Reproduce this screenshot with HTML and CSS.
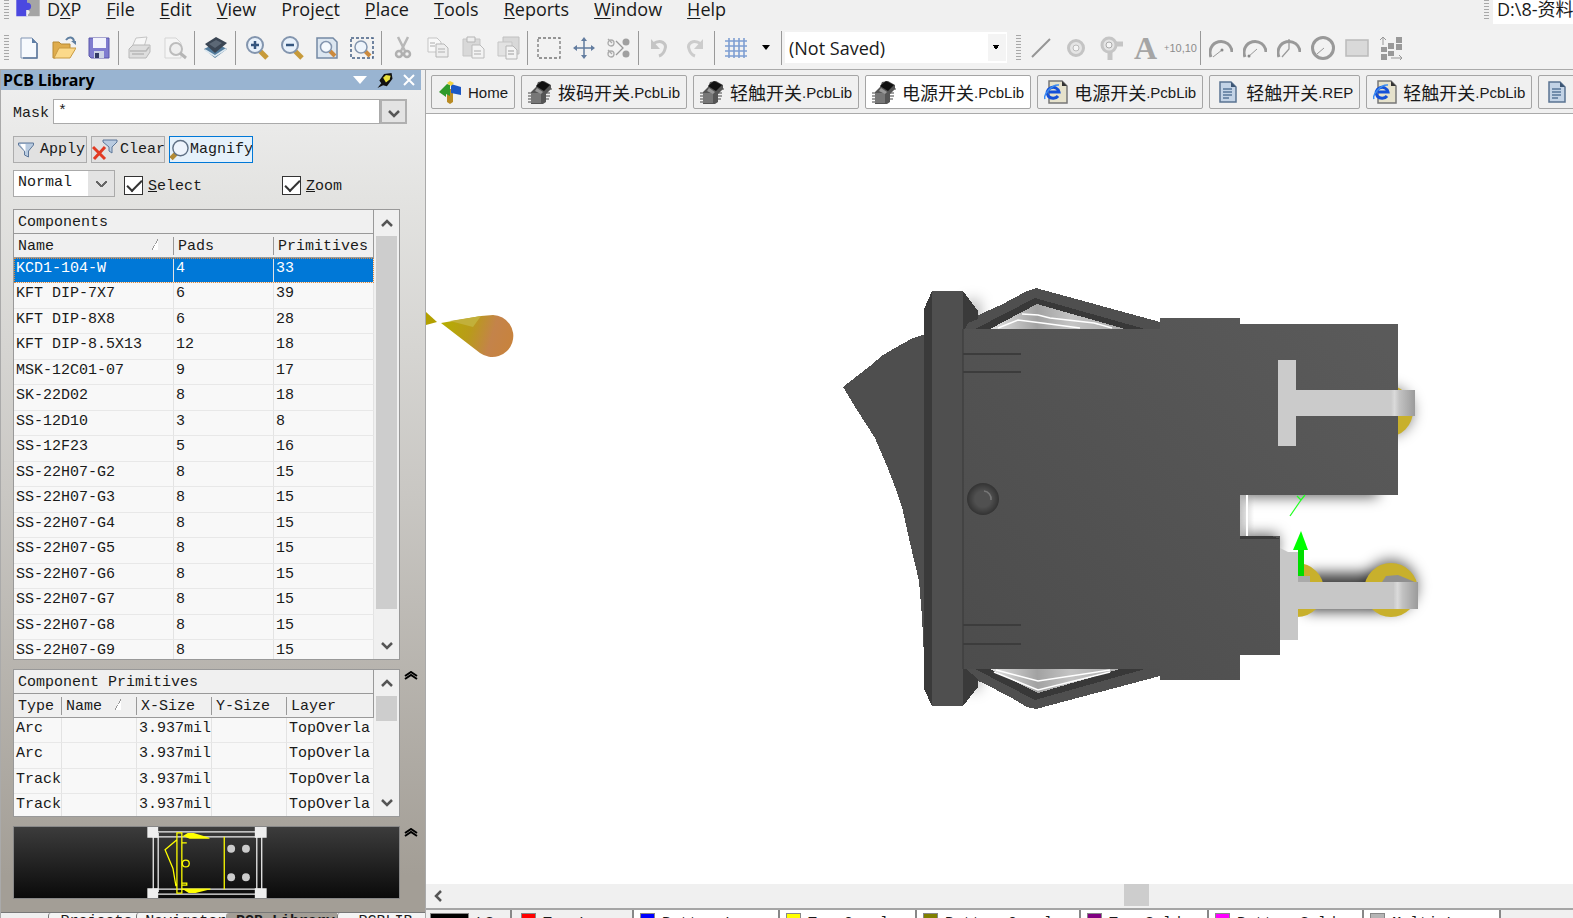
FILE: index.html
```html
<!DOCTYPE html>
<html lang="zh-CN">
<head>
    <meta charset="UTF-8">
    <meta name="viewport" content="width=device-width, initial-scale=1.0">
    <title>PCB Library</title>
    <link rel="stylesheet" href="styles.css">
</head>
<body>
    <!-- shared icons -->
    <svg class="sprite" aria-hidden="true">
        <symbol id="chip" viewBox="0 0 24 24">
            <path d="M0 13h5M0 16h5M0 19h5M0 22h5M16 13h6M16 16h6M16 19h5M18 9h6" stroke="#444" stroke-width="1"/>
            <path d="M3 12l5-5 2-5 6-1 7 4v4l-5 5v8l-3 2H3z" fill="#555"/>
            <path d="M3 13h10v10H3z" fill="#777"/>
            <path d="M8 6l6-5 8 4-6 6z" fill="#111"/>
            <path d="M9 8l6 4-2 2-6-3z" fill="#999"/>
        </symbol>
        <symbol id="ie" viewBox="0 0 24 24">
            <path d="M5 1h13l5 5v17H5z" fill="#e6e2cc" stroke="#777" stroke-width="1.500"/>
            <path d="M18 1v5h5z" fill="#333"/>
            <path d="M14 16a6 5.500 0 1 1 1-4H5" fill="none" stroke="#1450d8" stroke-width="3"/>
            <path d="M1 19C-1 15 8 4 15 5" fill="none" stroke="#3b8bf0" stroke-width="1.500"/>
        </symbol>
        <symbol id="doc" viewBox="0 0 24 24">
            <path d="M4 2h11l5 5v15H4z" fill="#c3d3e6" stroke="#5a7391" stroke-width="1.500"/>
            <path d="M15 2v5h5z" fill="#3d5674"/>
            <path d="M7 9h9M7 12h9M7 15h9M7 18h6" stroke="#587799" stroke-width="1.300"/>
        </symbol>
        <symbol id="up" viewBox="0 0 12 8"><path d="M1 7l5-5 5 5" fill="none" stroke="currentColor" stroke-width="2.500"/></symbol>
        <symbol id="down" viewBox="0 0 12 8"><path d="M1 1l5 5 5-5" fill="none" stroke="currentColor" stroke-width="2.500"/></symbol>
        <symbol id="up2" viewBox="0 0 14 9"><path d="M1 5l6-4 6 4M1 8l6-4 6 4" fill="none" stroke="#000" stroke-width="2"/></symbol>
        <symbol id="funnel" viewBox="0 0 18 18"><path d="M1 2h15v2l-5 6v6l-4-2v-4L1 4z" fill="#b9cbe0" stroke="#5d7799"/><path d="M3 3h5v8L3 4z" fill="#fff"/></symbol>
    </svg>

    <header class="menubar">
        <span class="grip"></span>
        <svg class="logo" viewBox="0 0 26 20"><path d="M12 0h14v18H12z" fill="#a5a5a5"/><path d="M0 0h12v3c6-1 6 9 0 8v7H0z" fill="#4b48e0"/><path d="M12 11c3 0 4 3 1 5v2h-2v-7z" fill="#eee"/></svg>
        <nav class="menu">
            <button>D<u>X</u>P</button>
            <button><u>F</u>ile</button>
            <button><u>E</u>dit</button>
            <button><u>V</u>iew</button>
            <button>Proje<u>c</u>t</button>
            <button><u>P</u>lace</button>
            <button><u>T</u>ools</button>
            <button><u>R</u>eports</button>
            <button><u>W</u>indow</button>
            <button><u>H</u>elp</button>
        </nav>
        <span class="grip"></span>
        <input class="path" type="text" value="D:\8-资料" aria-label="Path">
    </header>

    <div class="toolbar">
        <span class="grip"></span>
        <button aria-label="New"><svg viewBox="0 0 24 24"><path d="M4 2h11l5 5v15H4z" fill="#f6f9fd" stroke="#8296b4"/><path d="M20 7v15H6" fill="none" stroke="#5c779c" stroke-width="1.500"/><path d="M15 2v5h5z" fill="#5f7fa6"/></svg></button>
        <button aria-label="Open"><svg viewBox="0 0 24 24"><path d="M1 6h6l2 2h9v5L3 22H1z" fill="#dfac4c" stroke="#b88a35"/><path d="M7 12h17l-6 10H2z" fill="#fbd98a" stroke="#c99a41"/><path d="M14 4c3-4 7-3 8 1" fill="none" stroke="#5f7fa0" stroke-width="2"/><path d="M19 5h5v4z" fill="#5f7fa0"/></svg></button>
        <button aria-label="Save"><svg viewBox="0 0 24 24"><path d="M2 2h20v20H4l-2-2z" fill="#7f7ccf" stroke="#5a57aa"/><path d="M6 2h13v10H6z" fill="#f2f3fc"/><path d="M7 15h10v7H7z" fill="#cdd3e6"/><path d="M8 17h4v5H8z" fill="#333a66"/></svg></button>
        <span class="sep"></span>
        <button aria-label="Print"><svg viewBox="0 0 24 24"><path d="M8 2l11-1-3 10H4z" fill="#f7f7f7" stroke="#c5c5c5"/><path d="M1 13l4-4h17v7l-4 6H1z" fill="#dedede" stroke="#b8b8b8"/><path d="M2 15h16l3-4M4 18h12" fill="none" stroke="#b8b8b8" stroke-width="1.500"/></svg></button>
        <button aria-label="Print preview"><svg viewBox="0 0 24 24"><path d="M2 2h11l5 5v15H2z" fill="#f5f5f5" stroke="#d5d5d5"/><circle cx="13" cy="13" r="6" fill="#eee" stroke="#bcbcbc" stroke-width="2"/><path d="M17 17l6 5" stroke="#b5b5b5" stroke-width="3"/></svg></button>
        <span class="sep"></span>
        <button aria-label="Layers"><svg viewBox="0 0 24 24"><path d="M0 13l12-6 11 6-12 9z" fill="#547d9e"/><path d="M1 14l10 6 11-7" fill="none" stroke="#dce8f0" stroke-width="1.500"/><path d="M1 8l11-7 11 6-12 10z" fill="#3b4654"/><path d="M5 8l7-4 6 3-7 5z" fill="#5c6876"/></svg></button>
        <span class="sep"></span>
        <button aria-label="Zoom in"><svg viewBox="0 0 24 24"><path d="M15 15l7 7" stroke="#c79a3a" stroke-width="5"/><circle cx="10" cy="9" r="8" fill="#e8f1fb" stroke="#8395ae" stroke-width="2"/><path d="M6 9h8M10 5v8" stroke="#35567f" stroke-width="2.500"/></svg></button>
        <button aria-label="Zoom out"><svg viewBox="0 0 24 24"><path d="M15 15l7 7" stroke="#c79a3a" stroke-width="5"/><circle cx="10" cy="9" r="8" fill="#e8f1fb" stroke="#8395ae" stroke-width="2"/><path d="M6 9h8" stroke="#35567f" stroke-width="2.500"/></svg></button>
        <button aria-label="Fit document"><svg viewBox="0 0 24 24"><path d="M2 2h16l4 4v16H2z" fill="#dce6f0" stroke="#7489a4" stroke-width="1.500"/><path d="M15 15l5 5" stroke="#cc8a3d" stroke-width="4"/><circle cx="11" cy="11" r="5.500" fill="#f5f9fd" stroke="#8395ae" stroke-width="1.500"/></svg></button>
        <button aria-label="Fit area"><svg viewBox="0 0 24 24"><path d="M1 2h22v20H1z" fill="none" stroke="#445f84" stroke-width="1.500" stroke-dasharray="3 2"/><path d="M15 15l5 5" stroke="#cc8a3d" stroke-width="4"/><circle cx="11" cy="11" r="6" fill="#eef4fb" stroke="#8395ae" stroke-width="1.500"/></svg></button>
        <span class="sep"></span>
        <button aria-label="Cut"><svg viewBox="0 0 24 24"><path d="M7 1l7 14M17 1l-7 14" stroke="#b8b8b8" stroke-width="2.500"/><circle cx="8" cy="18" r="3" fill="none" stroke="#b0b0b0" stroke-width="2.500"/><circle cx="16" cy="18" r="3" fill="none" stroke="#b0b0b0" stroke-width="2.500"/></svg></button>
        <button aria-label="Copy"><svg viewBox="0 0 24 24"><path d="M2 2h9l4 4v10H2z" fill="#f8f8f8" stroke="#c5c5c5"/><path d="M10 8h8l4 4v9H10z" fill="#eee" stroke="#b5b5b5"/><path d="M4 7h5M4 10h5M12 13h7M12 16h7" stroke="#c5c5c5" stroke-width="1.500"/></svg></button>
        <button aria-label="Paste"><svg viewBox="0 0 24 24"><path d="M2 3h17v17H2z" fill="#d8d8d8" stroke="#c5c5c5"/><path d="M6 1h8v5H6z" fill="#eee" stroke="#b5b5b5"/><path d="M11 9h8l4 4v9H11z" fill="#f3f3f3" stroke="#bbb"/><path d="M13 15h7M13 18h7" stroke="#c5c5c5" stroke-width="1.500"/></svg></button>
        <button aria-label="Paste special"><svg viewBox="0 0 24 24"><path d="M7 1h16v17H7z" fill="#d8d8d8" stroke="#c0c0c0"/><path d="M2 6h14v14H2z" fill="#e2e2e2" stroke="#c5c5c5"/><path d="M10 10h7l4 4v9H10z" fill="#f3f3f3" stroke="#b5b5b5"/><path d="M12 15h6M12 18h6" stroke="#bbb" stroke-width="1.500"/></svg></button>
        <span class="sep"></span>
        <button aria-label="Select area"><svg viewBox="0 0 24 24"><path d="M1 2h22v20H1z" fill="none" stroke="#777" stroke-width="1.300" stroke-dasharray="3 2"/></svg></button>
        <button aria-label="Move"><svg viewBox="0 0 24 24"><path d="M12 3v18M3 12h18" stroke="#627c9f" stroke-width="1.500"/><path d="M12 1l3 4H9zM12 23l3-4H9zM1 12l4-3v6zM23 12l-4-3v6z" fill="#627c9f"/></svg></button>
        <button aria-label="Deselect"><svg viewBox="0 0 24 24"><path d="M9 5l7 7-7 7" fill="none" stroke="#999" stroke-width="1.300"/><g fill="none" stroke="#aaa" stroke-width="1.300"><circle cx="4" cy="7" r="3"/><circle cx="4" cy="18" r="3"/><path d="M1 3l4 4M1 14l4 4"/></g><circle cx="19" cy="6" r="3.500" fill="#a0a0a0"/><circle cx="19" cy="18" r="3.500" fill="#a0a0a0"/></svg></button>
        <span class="sep"></span>
        <button aria-label="Undo"><svg viewBox="0 0 24 24"><path d="M5 8c8-6 14 0 12 5-1 4-3 6-6 7" fill="none" stroke="#c5c5c5" stroke-width="3"/><path d="M3 3v10h9z" fill="#c5c5c5"/></svg></button>
        <button aria-label="Redo"><svg viewBox="0 0 24 24"><path d="M18 8C10 2 4 8 6 13c1 4 3 6 6 7" fill="none" stroke="#ccc" stroke-width="3"/><path d="M20 3v10h-9z" fill="#ccc"/></svg></button>
        <span class="sep"></span>
        <button aria-label="Grid"><svg viewBox="0 0 24 24"><path d="M5 2v20M10 2v20M15 2v20M20 2v20M1 5h22M1 10h22M1 15h22M1 20h22" stroke="#7e9ed2" stroke-width="1.600"/></svg></button>
        <button class="narrow" aria-label="Grid options"><svg viewBox="0 0 8 5"><path d="M0 0h8L4 5z"/></svg></button>
        <span class="sep"></span>
        <select class="saved" aria-label="Saved view"><option>(Not Saved)</option></select>
        <span class="grip"></span>
        <button aria-label="Line"><svg viewBox="0 0 24 24"><path d="M3 21L21 3" stroke="#959595" stroke-width="2"/></svg></button>
        <button aria-label="Pad"><svg viewBox="0 0 24 24"><circle cx="12" cy="12" r="7.500" fill="#e5e5e5" stroke="#c4c4c4" stroke-width="3"/><circle cx="12" cy="12" r="3" fill="#f5f5f5" stroke="#bbb"/></svg></button>
        <button aria-label="Via"><svg viewBox="0 0 24 24"><path d="M11 8h13M11 10v14" stroke="#c5c5c5" stroke-width="5"/><circle cx="10" cy="9" r="7" fill="#e5e5e5" stroke="#c5c5c5" stroke-width="3"/><circle cx="10" cy="9" r="3" fill="#f5f5f5" stroke="#aaa"/></svg></button>
        <button class="letter" aria-label="String">A</button>
        <button class="coord" aria-label="Coordinate"><sub>+</sub>10,10</button>
        <span class="sep"></span>
        <div class="draw">
            <button aria-label="Arc by centre"><svg viewBox="0 0 24 24"><path d="M2 21A11 11 0 1 1 23 16" fill="none" stroke="#999" stroke-width="3"/><path d="M4 21l9-7" stroke="#999"/><circle cx="13" cy="14" r="1.500" fill="#888"/></svg></button>
            <button aria-label="Arc by edge"><svg viewBox="0 0 24 24"><path d="M2 21A11 11 0 1 1 23 16" fill="none" stroke="#999" stroke-width="3"/><path d="M5 21l9-8" stroke="#999"/><circle cx="6" cy="20" r="1.500" fill="#888"/></svg></button>
            <button aria-label="Arc any angle"><svg viewBox="0 0 24 24"><path d="M2 21A11 11 0 1 1 23 16" fill="none" stroke="#999" stroke-width="3"/><path d="M5 21l7-8V3" fill="none" stroke="#999" stroke-width="1.300"/></svg></button>
            <button aria-label="Full circle"><svg viewBox="0 0 24 24"><circle cx="12" cy="12" r="10.500" fill="none" stroke="#999" stroke-width="3"/><path d="M6 18l7-6" stroke="#999"/></svg></button>
            <button aria-label="Fill"><svg viewBox="0 0 24 24"><path d="M1 4h22v16H1z" fill="#d9d9d9" stroke="#bbb" stroke-width="1.500"/></svg></button>
            <button aria-label="Array"><svg viewBox="0 0 24 24"><path d="M2 11h6v5H2zM2 18h6v6H2zM9 7h6v6H9zM9 15h6v5H9zM17 1h6v6h-6zM17 8h6v6h-6z" fill="#999"/><path d="M4 9V1M1 4l3-3 3 3M12 22h11M20 19l3 3-3 3" fill="none" stroke="#999"/></svg></button>
        </div>
    </div>

    <main class="workspace">
        <aside class="panel">
            <div class="panel-title">
                <h1>PCB Library</h1>
                <button aria-label="Panel menu"><svg viewBox="0 0 14 8"><path d="M0 0h14L7 8z" fill="#fff"/></svg></button>
                <button aria-label="Pin"><svg viewBox="0 0 16 16"><path d="M0 16l4-5-2-3 5-7 8-1 1 6-6 8-4-1z" fill="#111"/><path d="M6 5l3-3 5 1-1 4-4 3z" fill="#e8e03c"/></svg></button>
                <button aria-label="Close"><svg viewBox="0 0 12 12"><path d="M1 1l10 10M11 1L1 11" stroke="#fff" stroke-width="2"/></svg></button>
            </div>

            <div class="panel-body">
                <div class="mask">
                    <label for="mask">Mask</label>
                    <input type="text" id="mask" value="*">
                    <button aria-label="Show masks"><svg viewBox="0 0 12 8"><use href="#down"/></svg></button>
                </div>
                <div class="actions">
                    <button><svg viewBox="0 0 18 18"><use href="#funnel"/></svg>Apply</button>
                    <button class="clear"><svg viewBox="0 0 26 22"><path d="M1 8l12 12M13 8L2 20" stroke="#e23a22" stroke-width="3"/><g transform="translate(10 0)"><path d="M1 1h14v2l-5 5v6l-3-2V8L1 3z" fill="#b9cbe0" stroke="#5d7799"/></g></svg>Clear</button>
                    <button class="on"><svg viewBox="0 0 20 22"><path d="M1 20l6-6" stroke="#b28a35" stroke-width="5"/><circle cx="11" cy="9" r="8" fill="#eef4fc" stroke="#5f7085" stroke-width="1.500"/></svg>Magnify</button>
                </div>
                <div class="filters">
                    <select aria-label="Mode"><option>Normal</option></select>
                    <input type="checkbox" id="select" checked>
                    <label for="select"><u>S</u>elect</label>
                    <input type="checkbox" id="zoom" checked>
                    <label for="zoom"><u>Z</u>oom</label>
                </div>

                <section class="list components">
                    <div class="rows">
                        <table>
                            <colgroup><col class="c-name"><col class="c-pads"><col></colgroup>
                            <thead>
                                <tr class="title"><th colspan="3">Components</th></tr>
                                <tr><th>Name<i class="sort"></i></th><th>Pads</th><th>Primitives</th></tr>
                            </thead>
                            <tbody>
                                <tr class="selected"><td>KCD1-104-W</td><td>4</td><td>33</td></tr>
                                <tr><td>KFT DIP-7X7</td><td>6</td><td>39</td></tr>
                                <tr><td>KFT DIP-8X8</td><td>6</td><td>28</td></tr>
                                <tr><td>KFT DIP-8.5X13</td><td>12</td><td>18</td></tr>
                                <tr><td>MSK-12C01-07</td><td>9</td><td>17</td></tr>
                                <tr><td>SK-22D02</td><td>8</td><td>18</td></tr>
                                <tr><td>SS-12D10</td><td>3</td><td>8</td></tr>
                                <tr><td>SS-12F23</td><td>5</td><td>16</td></tr>
                                <tr><td>SS-22H07-G2</td><td>8</td><td>15</td></tr>
                                <tr><td>SS-22H07-G3</td><td>8</td><td>15</td></tr>
                                <tr><td>SS-22H07-G4</td><td>8</td><td>15</td></tr>
                                <tr><td>SS-22H07-G5</td><td>8</td><td>15</td></tr>
                                <tr><td>SS-22H07-G6</td><td>8</td><td>15</td></tr>
                                <tr><td>SS-22H07-G7</td><td>8</td><td>15</td></tr>
                                <tr><td>SS-22H07-G8</td><td>8</td><td>15</td></tr>
                                <tr><td>SS-22H07-G9</td><td>8</td><td>15</td></tr>
                            </tbody>
                        </table>
                    </div>
                    <div class="scroll">
                        <button aria-label="Scroll up"><svg viewBox="0 0 12 8"><use href="#up"/></svg></button>
                        <div class="track"><div class="thumb"></div></div>
                        <button aria-label="Scroll down"><svg viewBox="0 0 12 8"><use href="#down"/></svg></button>
                    </div>
                </section>

                <div class="fold">
                    <section class="list primitives">
                        <div class="rows">
                            <table>
                                <colgroup><col class="c-type"><col class="c-size"><col class="c-size"><col class="c-size"><col></colgroup>
                                <thead>
                                    <tr class="title"><th colspan="5">Component Primitives</th></tr>
                                    <tr><th>Type</th><th>Name<i class="sort"></i></th><th>X-Size</th><th>Y-Size</th><th>Layer</th></tr>
                                </thead>
                                <tbody>
                                    <tr><td>Arc</td><td></td><td>3.937mil</td><td></td><td>TopOverla</td></tr>
                                    <tr><td>Arc</td><td></td><td>3.937mil</td><td></td><td>TopOverla</td></tr>
                                    <tr><td>Track</td><td></td><td>3.937mil</td><td></td><td>TopOverla</td></tr>
                                    <tr><td>Track</td><td></td><td>3.937mil</td><td></td><td>TopOverla</td></tr>
                                </tbody>
                            </table>
                        </div>
                        <div class="scroll">
                            <button aria-label="Scroll up"><svg viewBox="0 0 12 8"><use href="#up"/></svg></button>
                            <div class="track"><div class="thumb"></div></div>
                            <button aria-label="Scroll down"><svg viewBox="0 0 12 8"><use href="#down"/></svg></button>
                        </div>
                    </section>
                    <button class="toggle" aria-label="Fold primitives"><svg viewBox="0 0 14 9"><use href="#up2"/></svg></button>
                </div>

                <div class="fold">
                    <div class="preview">
                        <svg viewBox="0 0 386 72">
                            <g fill="none" stroke="#eee">
                                <path d="M139 6v60M144 6v60M244 6v60M249 6v60M138 5h110M138 10h110M138 63h110M138 68h110" stroke-width="1.300"/>
                            </g>
                            <g fill="none" stroke="#ff0" stroke-width="1.300">
                                <path d="M163 13l-12 10 8 19 3 18M163 6h5v61h-5zM211 10v53M168 63h29"/>
                                <circle cx="172" cy="37" r="3.500"/>
                                <path d="M168 16h5M168 57h5v2h-5"/>
                            </g>
                            <path d="M169 9l5-3h6l16 5v1h-20zM169 63h28l-15 4h-7z" fill="#ff0"/>
                            <g fill="#ccc"><circle cx="218" cy="22" r="4"/><circle cx="233" cy="22" r="4"/><circle cx="218" cy="51" r="4"/><circle cx="233" cy="51" r="4"/></g>
                            <path d="M133 0h11v11h-11zM242 0h12v11h-12zM133 62h11v10h-11zM242 62h12v10h-12z" fill="#eee"/>
                        </svg>
                    </div>
                    <button class="toggle" aria-label="Fold preview"><svg viewBox="0 0 14 9"><use href="#up2"/></svg></button>
                </div>
            </div>

            <div class="panel-tabs">
                <button>Projects</button>
                <button>Navigator</button>
                <button class="active">PCB Library</button>
                <button>PCBLIB</button>
            </div>
        </aside>

        <section class="editor">
            <div class="doc-tabs">
                <button><svg viewBox="0 0 24 24"><path d="M9 9h6v13l-3 2-3-2z" fill="#b98b22"/><path d="M1 12l8-8 3 1v11l-4-2v3z" fill="#2f9a2b"/><path d="M13 4l10 3v8l-10-2z" fill="#1c57c4"/><path d="M9 3l3-2 4 2-3 3z" fill="#f0d23c"/></svg>Home</button>
                <button><svg viewBox="0 0 24 24"><use href="#chip"/></svg><b>拨码开关</b>.PcbLib</button>
                <button><svg viewBox="0 0 24 24"><use href="#chip"/></svg><b>轻触开关</b>.PcbLib</button>
                <button class="active"><svg viewBox="0 0 24 24"><use href="#chip"/></svg><b>电源开关</b>.PcbLib</button>
                <button><svg viewBox="0 0 24 24"><use href="#ie"/></svg><b>电源开关</b>.PcbLib</button>
                <button><svg viewBox="0 0 24 24"><use href="#doc"/></svg><b>轻触开关</b>.REP</button>
                <button><svg viewBox="0 0 24 24"><use href="#ie"/></svg><b>轻触开关</b>.PcbLib</button>
                <button><svg viewBox="0 0 24 24"><use href="#doc"/></svg><b>拨码开关</b>.REP</button>
            </div>

            <div class="canvas">
                <svg viewBox="426 114 1147 770">
                    <defs>
                        <linearGradient id="body" gradientUnits="userSpaceOnUse" x1="960" y1="680" x2="1340" y2="300"><stop offset="0" stop-color="#4c4c4c"/><stop offset="1" stop-color="#5a5a5a"/></linearGradient>
                        <linearGradient id="bend"><stop offset="0" stop-color="#cbcbcb"/><stop offset=".15" stop-color="#dadada"/><stop offset=".35" stop-color="#c2c2c2"/><stop offset="1" stop-color="#9b9b9b"/></linearGradient>
                        <linearGradient id="glass"><stop offset="0" stop-color="#e4e4e4"/><stop offset=".35" stop-color="#a2a2a2"/><stop offset=".6" stop-color="#c4c4c4"/><stop offset="1" stop-color="#aaa"/></linearGradient>
                        <linearGradient id="gap"><stop offset="0" stop-color="#888" stop-opacity=".5"/><stop offset="1" stop-color="#888" stop-opacity="0"/></linearGradient>
                        <linearGradient id="drop" gradientUnits="userSpaceOnUse" x1="441" y1="323" x2="513" y2="345"><stop offset="0" stop-color="#b5ae00"/><stop offset=".4" stop-color="#b99b1a"/><stop offset=".7" stop-color="#c4834a"/><stop offset="1" stop-color="#c8833c"/></linearGradient>
                        <radialGradient id="knob"><stop offset="0" stop-color="#505050"/><stop offset=".5" stop-color="#505050"/><stop offset="1" stop-color="#333"/></radialGradient>
                        <filter id="soft" x="-50%" y="-50%" width="200%" height="200%"><feGaussianBlur stdDeviation="7"/></filter>
                    </defs>

                    <path d="M426 312l11 10-11 3z" fill="#b3a000"/>
                    <path d="M441 323l40-7 12-1a21 21 0 1 1-13 38z" fill="url(#drop)"/>
                    <path d="M450 321l31-5-8 11z" fill="#c2b03a"/>

                    <!-- shadows -->
                    <g filter="url(#soft)" fill="#000">
                        <path d="M1242 480h136v17h-136zM1242 534h36v20h-36z" opacity=".6"/>
                        <path d="M1305 573h75v38h-75z" opacity=".75"/>
                        <circle cx="1391" cy="586" r="26" opacity=".6"/>
                        <circle cx="1389" cy="411" r="24" opacity=".5"/>
                        <path d="M965 300h15v30h-15zM965 670h15v20h-15z" opacity=".3"/>
                    </g>

                    <!-- pads and pins behind the housing -->
                    <circle cx="1387" cy="411" r="26" fill="#c8b02c"/>
                    <circle cx="1297" cy="590" r="27" fill="#c8b02c"/>
                    <circle cx="1391" cy="590" r="27" fill="#c8b02c"/>
                    <path d="M1382 582l4-6 12-1 17 7z" fill="#8f8f8f"/>
                    <path d="M1298 576h12v8h-12z" fill="#aaa"/>
                    <path d="M1240 495h14v41h-14z" fill="url(#gap)"/>
                    <path d="M1247 495v41M1247 655v17h-7" fill="none" stroke="#fff" stroke-width="2"/>

                    <!-- housing -->
                    <g shape-rendering="crispEdges">
                        <path d="M925 334l-14 5-16 9-12 7-13 11-27 21 14 23 18 28 12 28 10 26 5 15 8 36 9 38 3 36 2 40 1 40z" fill="#4e4e4e"/>
                        <path d="M963 329l5-8 17-9 18-8 9-5 15-8 9-3 124 34v10zM963 668l6 9 16 7 25 13 17 10 9 2 124-33v-10z" fill="#4f4f4f"/>
                        <path d="M975 329l60-31 110 31zM975 669l60 31 110-31z" fill="#383838"/>
                        <path d="M990 329l47-25 88 25zM990 669l48 24 82-24z" fill="url(#glass)"/>
                        <path d="M963 291l15 20v8l-10 4-5 10zM963 706l15-19v-8l-12-10h-3z" fill="#3a3a3a"/>
                        <path d="M924 309l8-18h31v415h-31l-8-17z" fill="#4f4f4f"/>
                        <path d="M924 309l8-18v415l-8-17z" fill="#3a3a3a"/>
                        <path d="M963 329h197v-11h80v6h158v171h-158v41h40v119h-40v25h-80v-11H963z" fill="url(#body)"/>
                        <path d="M1240 536h32l8 3h-40z" fill="#3b3b3b"/>
                    </g>
                    <path d="M1022 314l16 1 12 3 44 5 18 5M998 328l20-8 24 3 38 5M996 670l42 11 72-11M994 672l44 18 72-18" fill="none" stroke="#fff" stroke-width="1.500"/>
                    <path d="M963 329v340" stroke="#383838"/>
                    <path d="M963 354h58M963 372h58M963 625h58M963 644h58" stroke="#3c3c3c" stroke-width="2"/>
                    <circle cx="983" cy="499" r="16" fill="url(#knob)"/>
                    <path d="M984 491a8 8 0 0 1 7 9" fill="none" stroke="#777" stroke-width="1.500"/>

                    <!-- terminals -->
                    <path d="M1278 360h18v30h99v26h-99v30h-18z" fill="#cbcbcb"/>
                    <path d="M1391 390h24v26h-24z" fill="url(#bend)"/>
                    <path d="M1280 548l8 4h10v30h98v27h-98v31h-18z" fill="#c7c7c7"/>
                    <path d="M1394 582h24v27h-24z" fill="url(#bend)"/>

                    <!-- origin marker -->
                    <path d="M1298 550h6v26h-6z" fill="#0d0"/>
                    <path d="M1301 531l7 19h-15z" fill="#0f0"/>
                    <path d="M1290 516l11-16M1297 496l4 4 4-5" fill="none" stroke="#2f2" stroke-width="1.300"/>
                </svg>
            </div>

            <div class="hscroll">
                <button aria-label="Scroll left"><svg viewBox="0 0 8 12"><path d="M7 1L2 6l5 5" fill="none" stroke="#555" stroke-width="2.500"/></svg></button>
                <div class="track"><div class="thumb"></div></div>
            </div>

            <div class="layer-tabs">
                <button class="set"><i class="swatch black"></i>LS</button>
                <button class="active"><i class="swatch red"></i>Top Layer</button>
                <button><i class="swatch blue"></i>Bottom Layer</button>
                <button><i class="swatch yellow"></i>Top Overlay</button>
                <button><i class="swatch olive"></i>Bottom Overlay</button>
                <button><i class="swatch purple"></i>Top Solder</button>
                <button><i class="swatch magenta"></i>Bottom Solder</button>
                <button><i class="swatch grey"></i>Multi-Layer</button>
            </div>
        </section>
    </main>
</body>
</html>
```
FILE: styles.css
```css
* { margin: 0; padding: 0; box-sizing: border-box; }
body { display: flex; flex-direction: column; height: 100vh; overflow: hidden; background-color: #f0f0f0; color: #1a1a1a; font-family: "Liberation Mono", "Noto Sans CJK SC", monospace; font-size: 15px; }
button, input, select { font: inherit; color: inherit; border: none; border-radius: 0; background: none; }
button { white-space: nowrap; }
svg { display: block; flex: none; }
.sprite { position: absolute; width: 0; height: 0; }
.grip { flex: none; width: 5px; height: 25px; background: repeating-linear-gradient(#a8a8a8 0 1px, #f0f0f0 1px 3px); }

/* menu bar */
.menubar { display: flex; flex: none; height: 30px; padding-left: 4px; font-family: "Open Sans", "Noto Sans CJK SC", sans-serif; font-size: 18px; }
.menubar .grip { height: 21px; }
.logo { width: 26px; height: 18px; margin-left: 6px; }
.menu { display: flex; flex: 1; gap: 25px; padding-left: 6px; }
.menu button { height: 18px; line-height: 18px; }
.menu u { text-underline-offset: 2px; }
.path { flex: none; width: 80px; height: 24px; margin-left: 4px; padding: 0 0 8px 4px; background-color: #fff; }

/* toolbar */
.toolbar { display: flex; flex: none; align-items: center; height: 40px; padding: 0 0 4px 4px; border-bottom: 1px solid #aaa; background-color: #f2f2f2; }
.toolbar button { display: flex; flex: none; align-items: center; justify-content: center; width: 35px; height: 34px; }
.toolbar button svg { width: 24px; height: 24px; }
.toolbar .grip + button { margin-left: 2px; }
.sep { flex: none; width: 1px; height: 34px; margin: 0 3px 0 2px; background-color: #999; }
.toolbar .narrow { width: 26px; }
.toolbar .narrow svg { width: 8px; height: 5px; }
.saved { flex: none; width: 222px; height: 31px; margin-right: 9px; padding-left: 4px; appearance: none; background: conic-gradient(from -35deg at 50% 100%, #000 70deg, transparent 0) right 7px center / 8px 5px no-repeat, linear-gradient(#f4f4f4, #f4f4f4) right 1px center / 18px 27px no-repeat, #fff; font-family: "Open Sans", sans-serif; font-size: 18px; }
.toolbar .letter { color: #a5a5a5; font: bold 32px/34px "Liberation Serif", serif; }
.toolbar .coord { color: #8c8c8c; font: 11px/20px "Liberation Sans", sans-serif; }
.draw { display: flex; }
.toolbar .draw button { width: 34px; }

/* side panel */
.workspace { display: flex; flex: 1; min-height: 0; }
.panel { display: flex; flex: none; flex-direction: column; width: 426px; border-left: 1px solid #aaa; border-right: 1px solid #aaa; background: linear-gradient(#f0f0f0, #e3e3e1 15%, #c9c7c3 50%, #a39e96 95%); }
.panel-title { display: flex; flex: none; align-items: center; gap: 10px; height: 20px; margin-right: 4px; padding: 0 6px 0 2px; background-color: #99b4d1; }
.panel-title h1 { flex: 1; color: #000; font: bold 16px/20px "Noto Sans", sans-serif; }
.panel-title svg { width: 14px; height: 8px; }
.panel-title button + button svg { width: 16px; height: 15px; }
.panel-title button:last-child svg { width: 12px; height: 12px; }
.panel-body { display: flex; flex: 1; flex-direction: column; min-height: 0; padding: 9px 0 13px 12px; }
.mask { display: flex; align-items: center; height: 25px; margin-right: 18px; }
.mask label { width: 40px; padding-top: 4px; }
.mask input { flex: 1; min-width: 0; height: 25px; padding: 0 4px; border: 1px solid #aaa; background-color: #fff; }
.mask button { display: flex; align-items: center; justify-content: center; width: 27px; height: 25px; padding-top: 4px; border: 2px solid #b0b0b0; background-color: #e3e3e3; color: #555; }
.mask svg { width: 12px; height: 8px; }
.actions { display: flex; gap: 4px; margin-top: 12px; }
.actions button { display: flex; align-items: center; width: 74px; height: 27px; padding-left: 3px; gap: 4px; overflow: hidden; border: 1px solid #adadad; background-color: #e1e1e1; }
.actions svg { width: 19px; height: 18px; }
.actions .clear { padding-left: 0; gap: 2px; }
.actions .clear svg { width: 26px; height: 22px; }
.actions .on { width: 84px; padding-left: 0; gap: 1px; border: 1px solid #0078d7; background-color: #e5f1fb; }
.actions .on svg { height: 22px; }
.filters { display: flex; align-items: center; height: 27px; margin-top: 7px; }
.filters select { width: 102px; height: 27px; margin-right: 9px; padding: 0 0 2px 4px; appearance: none; border: 1px solid #aaa; background: linear-gradient(45deg, transparent 40%, #666 40% 60%, transparent 60%) right 12px center / 6px 6px no-repeat, linear-gradient(-45deg, transparent 40%, #666 40% 60%, transparent 60%) right 7px center / 6px 6px no-repeat, linear-gradient(#e3e3e3, #e3e3e3) right / 26px 100% no-repeat, #fff; }
.filters input { appearance: none; width: 19px; height: 19px; margin-top: 4px; border: 1px solid #333; background-color: #fff; }
.filters input:checked::before { content: ""; display: block; width: 13px; height: 6px; margin: 3px 2px; border: solid #333; border-width: 0 0 2px 2px; transform: rotate(-45deg); }
.filters label { width: 139px; padding: 5px 0 0 5px; }
.filters label:last-child { width: 80px; }

/* lists */
.list { display: flex; width: 387px; overflow: hidden; border: 1px solid #999; background-color: #f0f0f0; }
.components { flex: 1; min-height: 0; margin: 12px 0 9px; }
.rows { flex: 1; overflow: hidden; background-color: #f8f8f8; }
.list table { width: 100%; table-layout: fixed; border-collapse: separate; border-spacing: 0; line-height: 18px; }
.c-name { width: 160px; }
.c-pads { width: 100px; }
.c-type { width: 48px; }
.c-size { width: 75px; }
.list th, .list td { overflow: hidden; white-space: nowrap; text-align: left; font-weight: normal; }
.list th { height: 24px; padding: 2px 0 0 4px; border-bottom: 1px solid #999; background: linear-gradient(#999, #999) right center / 1px 18px no-repeat, #f0f0f0; }
.list th:last-child { background: #f0f0f0; border-right: 1px solid #999; }
.list td { height: 25px; padding: 0 0 3px 2px; border-right: 1px solid #e3e3e3; border-bottom: 1px solid #e8e8e8; }
.list tr:nth-child(even) td { height: 26px; }
.list .selected td { background-color: #0078d7; color: #fff; }
.selected { outline: 1px dotted #e08a3c; outline-offset: -1px; }
.sort { display: inline-block; width: 11px; height: 11px; margin-left: 13px; background: linear-gradient(to bottom right, transparent 46%, #999 46% 54%, #fff 54%) 0 0 / 6px 11px no-repeat; }
.components .sort { margin-left: 98px; }
.scroll { display: flex; flex: none; flex-direction: column; width: 25px; padding: 0 2px; }
.scroll button { display: flex; flex: none; align-items: center; justify-content: center; height: 26px; color: #555; }
.scroll svg { width: 12px; height: 8px; }
.scroll .track { flex: 1; }
.scroll .thumb { height: 25px; background-color: #cdcdcd; }
.components .thumb { height: 94%; }
.fold { display: flex; flex: none; align-items: flex-start; gap: 4px; }
.fold + .fold { margin-top: 9px; }
.primitives { height: 148px; }
.toggle { margin-top: 2px; }
.toggle svg { width: 14px; height: 9px; }
.preview { width: 387px; height: 73px; border: 1px solid #888; background: linear-gradient(#3c3c3c, #0a0a0a); }
.preview svg { width: 100%; height: 100%; }
.panel-tabs { display: flex; flex: none; height: 6px; padding-left: 47px; overflow: hidden; border-top: 1px solid #777; background-color: #f0f0f0; }
.panel-tabs button { width: 101px; height: 24px; line-height: 16px; padding: 0 0 6px 8px; border-left: 1px solid #777; border-top-left-radius: 3px; background-color: #f4f4f4; }
.panel-tabs .active { width: 127px; border-left: none; font-weight: bold; background-color: #a39e96; }

/* document tabs */
.editor { display: flex; flex: 1; flex-direction: column; min-width: 0; }
.doc-tabs { display: flex; flex: none; gap: 6px; height: 44px; padding: 5px 0 0 5px; overflow: hidden; border-bottom: 1px solid #aaa; }
.doc-tabs button { display: flex; flex: none; align-items: center; height: 34px; padding: 0 6px; border: 1px solid #a5a5a5; border-radius: 2px; font: 15px "Liberation Sans", "Noto Sans CJK SC", sans-serif; }
.doc-tabs .active { background-color: #fff; }
.doc-tabs svg { width: 24px; height: 24px; margin-right: 6px; }
.doc-tabs b { font-size: 18px; font-weight: normal; }

.canvas { flex: 1; min-height: 0; background-color: #fff; }
.canvas svg { width: 100%; height: 100%; }
.hscroll { display: flex; flex: none; height: 24px; }
.hscroll button { display: flex; align-items: center; justify-content: center; width: 24px; }
.hscroll svg { width: 8px; height: 12px; }
.hscroll .track { flex: 1; }
.hscroll .thumb { width: 25px; height: 22px; margin-left: 60%; background-color: #cdcdcd; }

/* layer tabs */
.layer-tabs { display: flex; flex: none; height: 10px; overflow: hidden; border-top: 2px solid #a5a5a5; }
.layer-tabs button { display: flex; flex: none; align-items: flex-start; gap: 7px; height: 28px; padding: 3px 8px 0 6px; border-left: 2px solid #888; background-color: #fff; line-height: 21px; }
.layer-tabs button:last-child { border-right: 2px solid #888; }
.layer-tabs .active { width: 122px; padding-left: 9px; background-color: #f0f0f0; }
.layer-tabs .set { width: 84px; padding-left: 4px; border-left: none; background-color: #f0f0f0; }
.swatch { width: 15px; height: 15px; border: 1px solid #888; }
.black { width: 39px; background-color: #000; }
.red { background-color: #f00; }
.blue { background-color: #00f; }
.yellow { background-color: #ff0; }
.olive { background-color: #808000; }
.purple { background-color: #800080; }
.magenta { background-color: #f0f; }
.grey { background-color: #b5b5b5; }
```
